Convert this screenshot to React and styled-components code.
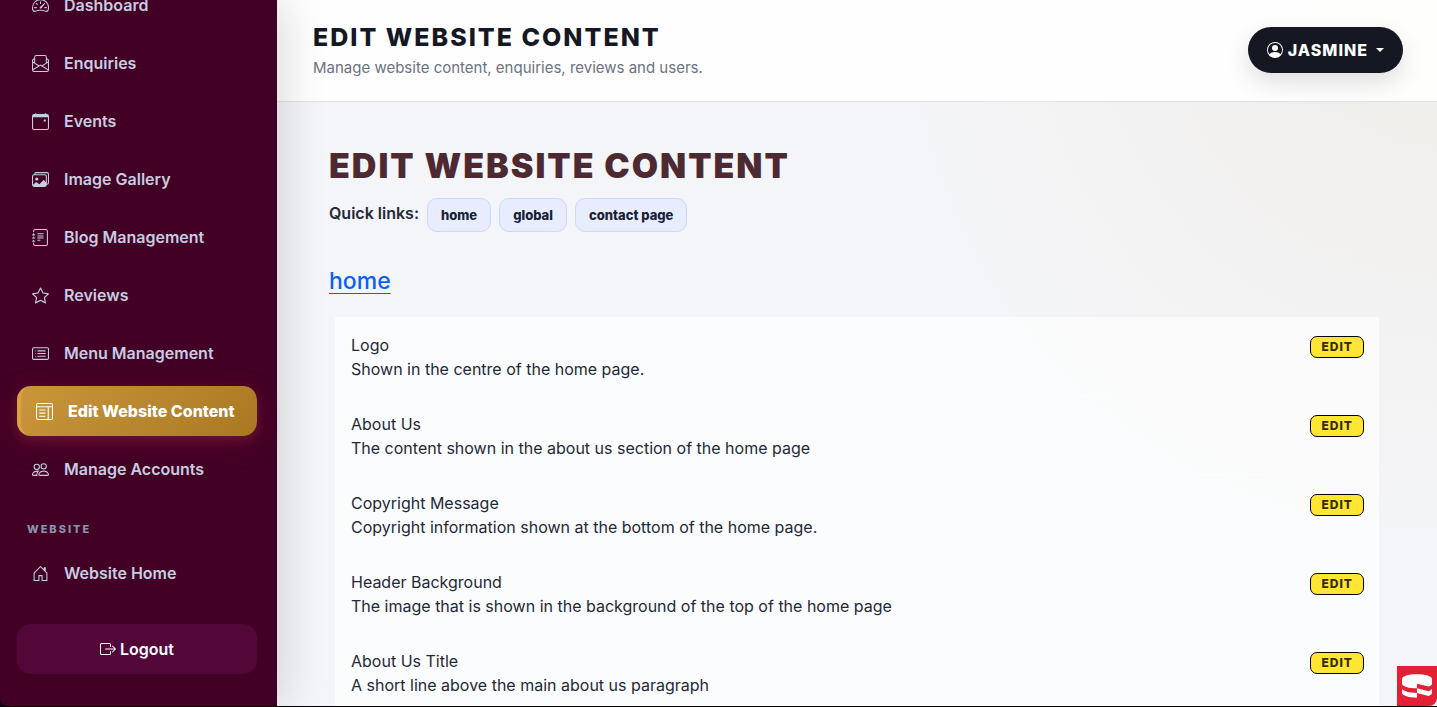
import React from "react";
import styled, { createGlobalStyle } from "styled-components";
import {
  BsSpeedometer2,
  BsEnvelopePaper,
  BsCalendarEvent,
  BsImages,
  BsJournalText,
  BsStar,
  BsCardList,
  BsLayoutTextWindow,
  BsPeople,
  BsHouseDoor,
  BsBoxArrowRight,
  BsPersonCircle,
} from "react-icons/bs";
import { SiCakephp } from "react-icons/si";

const GlobalStyle = createGlobalStyle`
  *, *::before, *::after { box-sizing: border-box; }
  body {
    margin: 0;
    color: #1f2937;
    background: #090a12;
    font-family: Inter, "Liberation Sans", sans-serif;
    font-size: 16px;
    line-height: 24px;
  }
  h1, h2, h3, p, ul { margin: 0; padding: 0; }
  ul { list-style: none; }
  button { font-family: inherit; cursor: pointer; }
`;

const Shell = styled.div`
  display: flex;
  height: 100vh;
  overflow: hidden;
  border-bottom: 1px solid #000;
`;

const Sidebar = styled.aside`
  position: relative;
  z-index: 2;
  display: flex;
  flex-direction: column;
  justify-content: flex-end;
  flex: 0 0 277px;
  padding: 0 20px 32px 17px;
  color: #c7cde0;
  background: #420024;
  border-bottom-left-radius: 8px;
  box-shadow: 10px 0 40px rgba(0, 0, 0, 0.12);
`;

const NavList = styled.ul`
  display: flex;
  flex-direction: column;
  gap: 8px;
`;

const NavLink = styled.a`
  display: flex;
  align-items: center;
  gap: 15px;
  height: 50px;
  padding-left: 15px;
  border-radius: 14px;
  color: ${({ $active }) => ($active ? "#fff" : "inherit")};
  font-weight: ${({ $active }) => ($active ? 800 : 600)};
  text-decoration: none;
  ${({ $active }) =>
    $active &&
    `
    border-left: 4px solid #dba144;
    background: linear-gradient(135deg, #c9963b, #a97822);
    box-shadow: 0 8px 24px rgba(128, 0, 64, 0.4), 0 4px 12px rgba(201, 150, 59, 0.2);
  `}

  svg {
    flex: none;
    width: 17px;
    height: 17px;
  }
`;

const SectionLabel = styled.h2`
  margin: 23px 0 7px;
  padding-left: 10px;
  color: #8b93ab;
  font-size: 11px;
  font-weight: 800;
  letter-spacing: 2px;
  text-transform: uppercase;
`;

const LogoutButton = styled.button`
  display: flex;
  align-items: center;
  justify-content: center;
  gap: 4px;
  flex: 0 0 50px;
  margin-top: 26px;
  border: 0;
  border-radius: 14px;
  color: #fff;
  background: #530738;
  font-size: 16px;
  font-weight: 600;
`;

const Main = styled.main`
  flex: 1;
  min-width: 0;
  overflow: hidden;
  background:
    radial-gradient(circle at top right, rgba(201, 150, 59, 0.08), transparent 40%),
    #f4f5f8;
`;

const TopBar = styled.header`
  display: flex;
  align-items: flex-start;
  justify-content: space-between;
  height: 102px;
  padding: 0 34px 0 36px;
  border-bottom: 1px solid #dfe1e5;
  background: rgba(255, 255, 255, 0.9);
`;

const TopHeading = styled.div`
  padding-top: 21px;
`;

const TopTitle = styled.h2`
  color: #151823;
  font-size: 25px;
  line-height: 32px;
  font-weight: 800;
  letter-spacing: 2px;
  text-transform: uppercase;
`;

const Subtitle = styled.p`
  margin-top: 3px;
  color: #6b7280;
  font-size: 15px;
`;

const UserButton = styled.button`
  display: flex;
  align-items: center;
  gap: 5px;
  height: 46px;
  margin-top: 27px;
  padding: 0 19px;
  border: 0;
  border-radius: 23px;
  color: #fff;
  background: #151823;
  box-shadow: 0 10px 24px rgba(0, 0, 0, 0.12);
  font-size: 16px;
  font-weight: 800;
  letter-spacing: 1px;
  text-transform: uppercase;
`;

const Caret = styled.span`
  margin-left: 3px;
  border: 4px solid transparent;
  border-top-color: #fff;
  border-bottom: 0;
`;

const Content = styled.div`
  padding: 44px 52px;
`;

const PageTitle = styled.h1`
  color: #4d2a31;
  font-size: 34px;
  line-height: 40px;
  font-weight: 900;
  letter-spacing: 2px;
  text-transform: uppercase;
`;

const QuickLinks = styled.nav`
  display: flex;
  align-items: center;
  gap: 8px;
  margin-top: 12px;
  font-weight: 600;
`;

const QuickLabel = styled.span`
  padding-bottom: 4px;
`;

const Chip = styled.a`
  height: 34px;
  padding: 0 13px;
  border: 1px solid #cdd8fb;
  border-radius: 10px;
  color: #1b2033;
  background: #e7edff;
  font-size: 13px;
  line-height: 33px;
  font-weight: 800;
  text-decoration: none;
`;

const GroupTitle = styled.h3`
  margin-top: 34px;
  font-size: 23px;
  line-height: 30px;
  font-weight: 500;
`;

const GroupLink = styled.a`
  color: #0d5efd;
  text-decoration: underline;
  text-decoration-thickness: 1px;
  text-underline-offset: 4px;
`;

const BlockList = styled.ul`
  margin: 21px 6px 0;
  background: rgba(255, 255, 255, 0.65);
`;

const BlockRow = styled.li`
  display: flex;
  align-items: flex-start;
  justify-content: space-between;
  padding: 16px 15px 14px 16px;
  border-bottom: 1px solid rgba(255, 255, 255, 0.6);
`;

const EditButton = styled.button`
  height: 22px;
  margin-top: 3px;
  padding: 0 10px;
  border: 1px solid #000;
  border-radius: 7px;
  color: #352b00;
  background: #ffe633;
  font-size: 12px;
  line-height: 20px;
  font-weight: 800;
  letter-spacing: 1px;
  text-transform: uppercase;
`;

const DebugButton = styled.button`
  position: fixed;
  right: 0;
  bottom: 1px;
  z-index: 3;
  display: grid;
  place-items: center;
  width: 40px;
  height: 40px;
  padding: 0;
  border: 0;
  border-bottom-right-radius: 8px;
  color: #fff;
  background: #e32036;
`;

const navItems = [
  { label: "Dashboard", Icon: BsSpeedometer2 },
  { label: "Enquiries", Icon: BsEnvelopePaper },
  { label: "Events", Icon: BsCalendarEvent },
  { label: "Image Gallery", Icon: BsImages },
  { label: "Blog Management", Icon: BsJournalText },
  { label: "Reviews", Icon: BsStar },
  { label: "Menu Management", Icon: BsCardList },
  { label: "Edit Website Content", Icon: BsLayoutTextWindow, active: true },
  { label: "Manage Accounts", Icon: BsPeople },
];

const quickLinks = ["home", "global", "contact page"];

const blocks = [
  ["Logo", "Shown in the centre of the home page."],
  ["About Us", "The content shown in the about us section of the home page"],
  ["Copyright Message", "Copyright information shown at the bottom of the home page."],
  ["Header Background", "The image that is shown in the background of the top of the home page"],
  ["About Us Title", "A short line above the main about us paragraph"],
];

function NavItem({ label, Icon, active }) {
  return (
    <li>
      <NavLink href="#" $active={active} aria-current={active ? "page" : undefined}>
        <Icon aria-hidden="true" />
        {label}
      </NavLink>
    </li>
  );
}

export default function App() {
  return (
    <>
      <GlobalStyle />
      <Shell>
        <Sidebar>
          <NavList>
            {navItems.map((item) => (
              <NavItem key={item.label} {...item} />
            ))}
          </NavList>
          <SectionLabel>Website</SectionLabel>
          <NavList>
            <NavItem label="Website Home" Icon={BsHouseDoor} />
          </NavList>
          <LogoutButton type="button">
            <BsBoxArrowRight aria-hidden="true" />
            Logout
          </LogoutButton>
        </Sidebar>
        <Main>
          <TopBar>
            <TopHeading>
              <TopTitle>Edit Website Content</TopTitle>
              <Subtitle>Manage website content, enquiries, reviews and users.</Subtitle>
            </TopHeading>
            <UserButton type="button" aria-haspopup="menu">
              <BsPersonCircle aria-hidden="true" />
              Jasmine
              <Caret />
            </UserButton>
          </TopBar>
          <Content>
            <PageTitle>Edit Website Content</PageTitle>
            <QuickLinks>
              <QuickLabel>Quick links:</QuickLabel>
              {quickLinks.map((name) => (
                <Chip key={name} href="#home">
                  {name}
                </Chip>
              ))}
            </QuickLinks>
            <GroupTitle id="home">
              <GroupLink href="#home">home</GroupLink>
            </GroupTitle>
            <BlockList>
              {blocks.map(([title, description]) => (
                <BlockRow key={title}>
                  <div>
                    <p>{title}</p>
                    <p>{description}</p>
                  </div>
                  <EditButton type="button">Edit</EditButton>
                </BlockRow>
              ))}
            </BlockList>
          </Content>
        </Main>
      </Shell>
      <DebugButton type="button" aria-label="Debug toolbar">
        <SiCakephp size={30} aria-hidden="true" />
      </DebugButton>
    </>
  );
}
